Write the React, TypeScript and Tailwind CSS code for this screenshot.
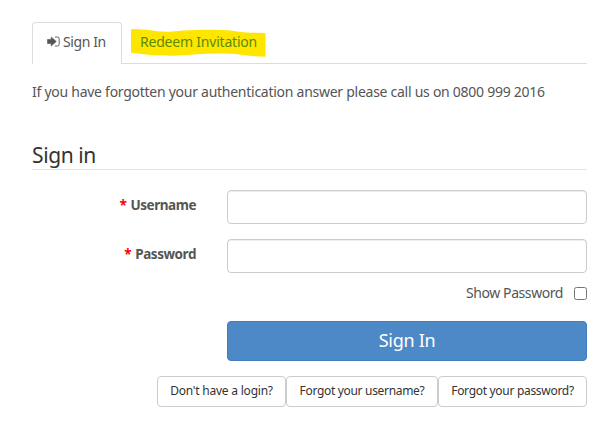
import React, { useState } from 'react';

const links = [
  { text: "Don't have a login?", width: 'w-[129px]', tracking: 'tracking-[-0.22px]' },
  { text: 'Forgot your username?', width: 'w-[152px]', tracking: 'tracking-[-0.32px]' },
  { text: 'Forgot your password?', width: 'w-[149px]', tracking: 'tracking-[-0.3px]' },
];

function SignInIcon() {
  return (
    <svg className="mr-[3px] h-[11px] w-[13px] shrink-0" viewBox="0 0 13 11" fill="none">
      <path d="M0.500 3.500H4.200V1L9.300 5.500L4.200 10V7.500H0.500Z" fill="currentColor" stroke="currentColor" strokeWidth="0.600" strokeLinejoin="round" />
      <path d="M8.300 1H10.300Q12.200 1 12.200 2.900V8.100Q12.200 10 10.300 10H8.300" stroke="currentColor" strokeWidth="0.900" strokeLinecap="round" />
    </svg>
  );
}

function Field({ id, label, type, value, onChange }: {
  id: string;
  label: string;
  type: string;
  value: string;
  onChange: (val: string) => void;
}) {
  return (
    <div className="flex">
      <label htmlFor={id} className="mr-[31px] w-[164px] pt-[5px] text-right text-[13.5px] leading-5 font-bold tracking-[-0.45px]">
        <span className="mr-px text-[#ff0000]">*</span> {label}
      </label>
      <input
        id={id}
        type={type}
        value={value}
        onChange={e => onChange(e.target.value)}
        className="h-[34px] w-[360px] rounded border border-[#ccc] bg-white px-3 shadow-[inset_0_1px_1px_rgba(0,0,0,0.075)]"
      />
    </div>
  );
}

export default function App() {
  const [username, setUsername] = useState('');
  const [password, setPassword] = useState('');
  const [showPassword, setShowPassword] = useState(false);

  return (
    <div className="h-[432px] w-[602px] bg-white pt-[22px] pr-[15px] pl-8 font-['Noto_Sans',sans-serif] text-[14px] text-[#555]">
      {/* Tabs */}
      <nav className="flex h-[42px] border-b border-[#ddd]">
        <button className="flex h-[42px] w-[90px] items-center rounded-t border border-b-0 border-[#ddd] bg-white pb-[4px] pl-[14px] text-[14px] tracking-[-0.4px]">
          <SignInIcon />
          <span className="whitespace-nowrap">Sign In</span>
        </button>
        <button className="relative ml-[9px] h-[41px] w-[135px] pb-[2px] text-[14px] whitespace-nowrap text-[#5b8c00]">
          <svg className="absolute top-[6px] left-0 h-[30px] w-[135px]" viewBox="0 0 135 30">
            <path d="M0 1Q8 1 18 2Q28 4 38 3.700Q52 2 66 2Q84 1.500 98 2.300Q112 5 122 4.700L134.500 5V28.700Q124 28.500 116 27.600Q102 25 89 25.600Q76 25.500 66 26.300Q50 28 36 27.600Q16 27 0 24.700Z" fill="#ffe600" />
          </svg>
          <span className="relative tracking-[-0.2px]">Redeem Invitation</span>
        </button>
      </nav>

      <p className="mt-[18px] text-[14px] leading-5 tracking-[-0.265px] whitespace-nowrap">
        If you have forgotten your authentication answer please call us on 0800 999 2016
      </p>

      <form onSubmit={e => e.preventDefault()}>
        <h2 className="mt-[41px] h-[27px] border-b border-[#e5e5e5] text-[21px] leading-6 tracking-[-0.4px] text-[#333]">Sign in</h2>
        <div className="mt-5 flex flex-col gap-[15px]">
          <Field id="username" label="Username" type="text" value={username} onChange={setUsername} />
          <Field id="password" label="Password" type={showPassword ? 'text' : 'password'} value={password} onChange={setPassword} />
        </div>
        <label className="mt-[10px] flex h-5 items-center justify-end gap-[11px] text-[14px] tracking-[-0.43px]">
          <span className="-mt-px">Show Password</span>
          <input
            type="checkbox"
            checked={showPassword}
            onChange={e => setShowPassword(e.target.checked)}
            className="mt-px h-[13px] w-[13px]"
          />
        </label>
        <button className="mt-[18px] ml-auto block h-10 w-[360px] rounded border border-[#3f7fc1] bg-[#4e89c7] pb-[2px] text-[18px] tracking-[-0.3px] text-white">
          Sign In
        </button>
        <div className="mt-[15px] flex justify-end">
          {links.map(link => (
            <button
              key={link.text}
              type="button"
              className={`h-[31px] rounded border border-[#ccc] bg-white pb-px text-[12px] whitespace-nowrap text-[#333] ${link.width} ${link.tracking}`}
            >
              {link.text}
            </button>
          ))}
        </div>
      </form>
    </div>
  );
}
